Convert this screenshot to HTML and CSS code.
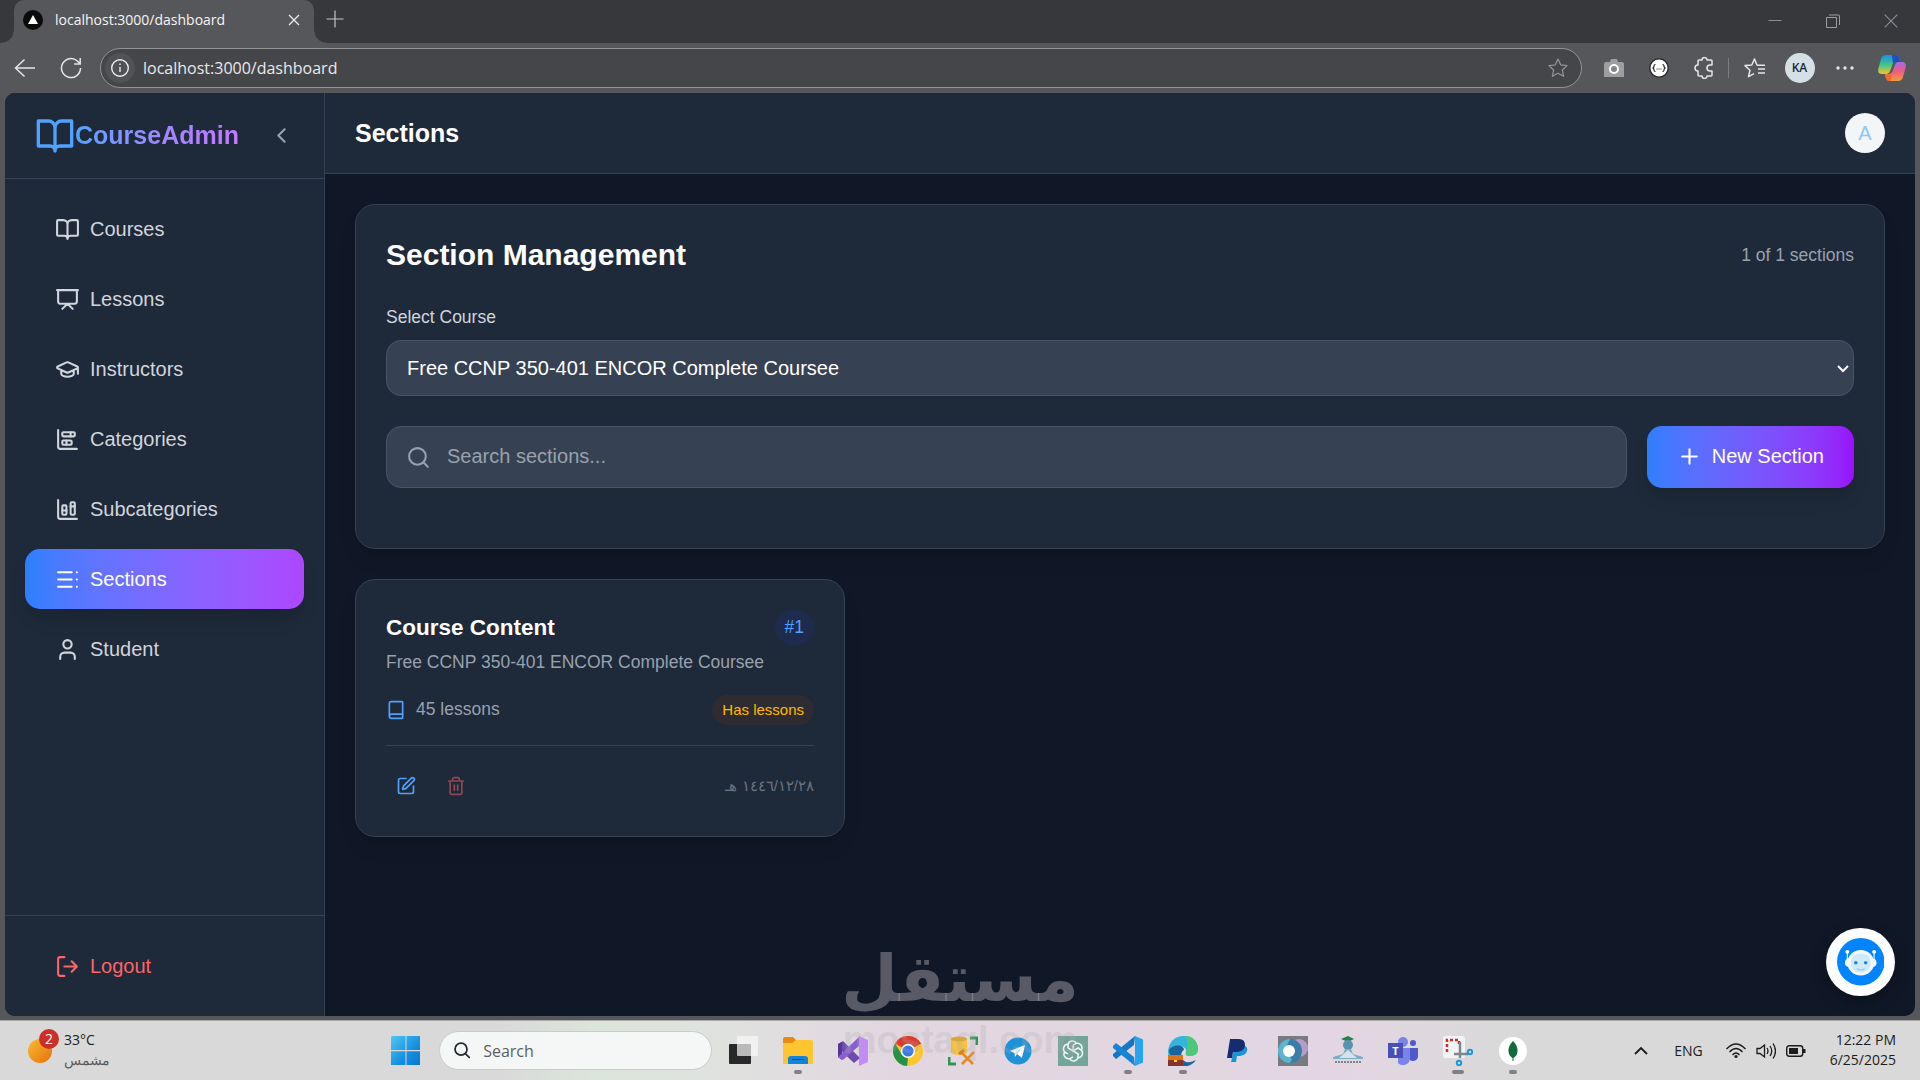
FILE: index.html
```html
<!DOCTYPE html>
<html lang="en">
<head>
  <meta charset="UTF-8">
  <title>localhost:3000/dashboard</title>
  <link rel="stylesheet" href="styles.css">
</head>
<body>

  <!-- tab strip -->
  <div class="tabstrip">
    <div class="tab">
      <svg class="favicon" viewBox="0 0 20 20"><circle cx="10" cy="10" r="10" fill="#0b0b0b"/><path d="M10 5l5 9H5z" fill="#fff"/></svg>
      <span class="tab-title">localhost:3000/dashboard</span>
      <button class="icon-btn" aria-label="Close tab"><svg width="12" height="12" viewBox="0 0 12 12" stroke="#e8e8e8" stroke-width="1.4"><path d="M1 1l10 10M11 1L1 11"/></svg></button>
    </div>
    <button class="icon-btn new-tab" aria-label="New tab"><svg width="18" height="18" viewBox="0 0 18 18" stroke="#c4c4c4" stroke-width="1.2"><path d="M9 0.5v17M0.5 9h17"/></svg></button>
    <div class="window-buttons">
      <button class="icon-btn" aria-label="Minimize"><svg width="14" height="14" viewBox="0 0 14 14" stroke="#8f9092"><path d="M0.5 6.5h13"/></svg></button>
      <button class="icon-btn" aria-label="Restore"><svg width="14" height="14" viewBox="0 0 14 14" fill="none" stroke="#9c9da0"><path d="M.5 3.5h10v10H.5zM3 1h9.5a1 1 0 0 1 1 1v9"/></svg></button>
      <button class="icon-btn" aria-label="Close"><svg width="14" height="14" viewBox="0 0 14 14" stroke="#8a9096" stroke-width="1.1"><path d="M.7.7l12.6 12.6M13.3.7L.7 13.3"/></svg></button>
    </div>
  </div>

  <!-- address bar -->
  <div class="toolbar">
    <button class="icon-btn tool" aria-label="Back"><svg width="22" height="20" viewBox="0 0 22 20" fill="none" stroke="#e6e6e6" stroke-width="1.5"><path d="M21 10H2M10.500 1.500L1.500 10l9 8.500"/></svg></button>
    <button class="icon-btn tool" aria-label="Refresh"><svg width="22" height="22" viewBox="0 0 22 22" fill="none" stroke="#e6e6e6" stroke-width="1.5"><path d="M20.500 11a9.500 9.500 0 1 1-2.900-6.800L20 6.500M20.200 1v6h-6"/></svg></button>
    <div class="address">
      <svg class="site-info" width="30" height="30" viewBox="0 0 30 30" fill="none" stroke="#ededed" stroke-width="1.4"><circle cx="15" cy="15" r="15" fill="#515256" stroke="none"/><circle cx="15" cy="15" r="8.300"/><path d="M15 14v5M15 10.500v1.500"/></svg>
      <input class="url" type="text" aria-label="Address" value="localhost:3000/dashboard">
      <svg width="20" height="20" viewBox="0 0 20 20" fill="none" stroke="#919296" stroke-width="1.3" stroke-linejoin="round"><path d="M10 1l2.700 5.800 6.300.8-4.600 4.400 1.200 6.300L10 15.200l-5.600 3.100L5.600 12 1 7.600l6.300-.8z"/></svg>
    </div>
    <div class="extensions">
      <button class="icon-btn ext" aria-label="Screenshot"><svg width="20" height="18" viewBox="0 0 20 18"><path d="M2 3h4l1-3h6l1 3h4a2 2 0 0 1 2 2v13H0V5a2 2 0 0 1 2-2z" fill="#9d9ea0"/><circle cx="10" cy="10" r="4" fill="#85868a" stroke="#fff" stroke-width="2"/></svg></button>
      <button class="icon-btn ext" aria-label="JSON viewer"><svg width="20" height="20" viewBox="0 0 20 20"><circle cx="10" cy="10" r="9.200" fill="#fff" stroke="#2b2c2f" stroke-width="1.400"/><path d="M6.500 6.500q-1.500 0-1.500 1.500t-1 2q1 .5 1 2t1.500 1.500M13.500 6.500q1.500 0 1.500 1.500t1 2q-1 .5-1 2t-1.500 1.500M7.500 11h1M9.500 11h1M11.500 11h1" fill="none" stroke="#222" stroke-width="1.200"/></svg></button>
      <button class="icon-btn ext" aria-label="Extensions"><svg width="20" height="22" viewBox="0 0 20 22" fill="none" stroke="#e6e6e6" stroke-width="1.500" stroke-linejoin="round"><path d="M5 3h3a2.500 2.500 0 0 1 5 0h4a1 1 0 0 1 1 1v4h-2a3 3 0 0 0 0 6h2v4a1 1 0 0 1-1 1h-4a2.500 2.500 0 0 1-5 0H5a1 1 0 0 1-1-1v-4a3 3 0 0 1 0-6V4a1 1 0 0 1 1-1z"/></svg></button>
      <span class="ext-divider"></span>
      <button class="icon-btn ext" aria-label="Favorites"><svg width="22" height="20" viewBox="0 0 22 20" fill="none" stroke="#e6e6e6" stroke-width="1.500" stroke-linejoin="round"><path d="M13 7.200L10.500 1 7.800 7 1 7.600l5 4.600-1.500 6.500 5.500-3M13 7.200h8M14 11h7M14 15h7"/></svg></button>
      <button class="icon-btn ext" aria-label="Profile"><span class="profile">KA</span></button>
      <button class="icon-btn ext" aria-label="Settings"><svg width="18" height="4" viewBox="0 0 18 4" fill="#e6e6e6"><circle cx="2" cy="2" r="1.700"/><circle cx="9" cy="2" r="1.700"/><circle cx="16" cy="2" r="1.700"/></svg></button>
      <button class="icon-btn ext" aria-label="Copilot">
        <svg width="28" height="26" viewBox="0 0 28 26">
          <defs>
            <linearGradient id="copA" x1="0" y1="0" x2="0" y2="1"><stop offset="0" stop-color="#1a8fe8"/><stop offset=".5" stop-color="#3fc48a"/><stop offset="1" stop-color="#f2c52e"/></linearGradient>
            <linearGradient id="copB" x1="0" y1="0" x2="0" y2="1"><stop offset="0" stop-color="#a46af0"/><stop offset=".5" stop-color="#ee5d7c"/><stop offset="1" stop-color="#f39a3f"/></linearGradient>
          </defs>
          <path d="M8 0h10q3 0 4 7h-4q-3 0-4 4l-2 5q-1 3-4 3H4q-5 0-3.500-6L3 4q1-4 5-4z" fill="url(#copA)"/>
          <path d="M14 0h4q3 0 4 7h-4q-2 0-3 2z" fill="#1b4fc4"/>
          <path d="M20 7h4q5 0 3.500 6L25 22q-1 4-5 4H11q-3 0-4-7h4q3 0 4-4l2-5q1-3 3-3z" fill="url(#copB)"/>
          <path d="M7 19h4q2 0 3-2l-1 9h-2q-3 0-4-7z" fill="#f06a35"/>
        </svg>
      </button>
    </div>
  </div>

  <!-- dashboard -->
  <div class="app">
    <aside class="sidebar">
      <div class="sidebar-header">
        <div class="brand">
          <svg class="icon brand-icon" viewBox="0 0 24 24"><path d="M2 3h6a4 4 0 0 1 4 4v14a3 3 0 0 0-3-3H2zM22 3h-6a4 4 0 0 0-4 4v14a3 3 0 0 1 3-3h7z"/></svg>
          <span class="brand-name">CourseAdmin</span>
        </div>
        <button class="collapse" aria-label="Collapse sidebar"><svg class="icon" viewBox="0 0 24 24"><path d="M15 18l-6-6 6-6"/></svg></button>
      </div>

      <nav class="nav">
        <a class="nav-item" href="#"><svg class="icon" viewBox="0 0 24 24"><path d="M12 7v14M3 18a1 1 0 0 1-1-1V4a1 1 0 0 1 1-1h5a4 4 0 0 1 4 4 4 4 0 0 1 4-4h5a1 1 0 0 1 1 1v13a1 1 0 0 1-1 1h-6a3 3 0 0 0-3 3 3 3 0 0 0-3-3z"/></svg>Courses</a>
        <a class="nav-item" href="#"><svg class="icon" viewBox="0 0 24 24"><path d="M2 3h20M21 3v11a2 2 0 0 1-2 2H5a2 2 0 0 1-2-2V3M7 21l5-5 5 5"/></svg>Lessons</a>
        <a class="nav-item" href="#"><svg class="icon" viewBox="0 0 24 24"><path d="M21.420 10.922a1 1 0 0 0-.019-1.838L12.830 5.180a2 2 0 0 0-1.660 0L2.600 9.080a1 1 0 0 0 0 1.832l8.570 3.908a2 2 0 0 0 1.660 0zM22 10v6M6 12.500V16a6 3 0 0 0 12 0v-3.500"/></svg>Instructors</a>
        <a class="nav-item" href="#"><svg class="icon" viewBox="0 0 24 24"><path d="M11 13v4M15 5v4M3 3v16a2 2 0 0 0 2 2h16"/><rect x="7" y="13" width="9" height="4" rx="1"/><rect x="7" y="5" width="12" height="4" rx="1"/></svg>Categories</a>
        <a class="nav-item" href="#"><svg class="icon" viewBox="0 0 24 24"><path d="M11 13H7M19 9h-4M3 3v16a2 2 0 0 0 2 2h16"/><rect x="15" y="5" width="4" height="12" rx="1"/><rect x="7" y="8" width="4" height="9" rx="1"/></svg>Subcategories</a>
        <a class="nav-item active" href="#"><svg class="icon" viewBox="0 0 24 24"><path d="M16 5H3M16 12H3M16 19H3M21 5h.01M21 12h.01M21 19h.01"/></svg>Sections</a>
        <a class="nav-item" href="#"><svg class="icon" viewBox="0 0 24 24"><path d="M19 21v-2a4 4 0 0 0-4-4H9a4 4 0 0 0-4 4v2"/><circle cx="12" cy="7" r="4"/></svg>Student</a>
      </nav>

      <div class="sidebar-footer">
        <button class="nav-item logout"><svg class="icon" viewBox="0 0 24 24"><path d="M9 21H5a2 2 0 0 1-2-2V5a2 2 0 0 1 2-2h4M16 17l5-5-5-5M21 12H9"/></svg>Logout</button>
      </div>
    </aside>

    <div class="main">
      <header class="header">
        <h1>Sections</h1>
        <button class="avatar">A</button>
      </header>

      <main class="content">
        <section class="panel">
          <div class="panel-head">
            <h2>Section Management</h2>
            <span class="muted">1 of 1 sections</span>
          </div>
          <label class="field-label" for="course">Select Course</label>
          <select class="field course-select" id="course">
            <option>Free CCNP 350-401 ENCOR Complete Coursee</option>
          </select>
          <div class="search-row">
            <div class="search-box">
              <svg class="icon" viewBox="0 0 24 24"><circle cx="11" cy="11" r="8"/><path d="M21 21l-4.350-4.350"/></svg>
              <input class="field" type="text" aria-label="Search sections" placeholder="Search sections...">
            </div>
            <button class="new-section"><svg class="icon" viewBox="0 0 24 24"><path d="M12 5v14M5 12h14"/></svg>New Section</button>
          </div>
        </section>

        <div class="cards">
          <article class="card">
            <div class="row">
              <h3>Course Content</h3>
              <span class="badge badge-number">#1</span>
            </div>
            <p class="muted course-name">Free CCNP 350-401 ENCOR Complete Coursee</p>
            <div class="row lessons-row">
              <span class="lessons muted"><svg class="icon icon-sm" viewBox="0 0 24 24"><path d="M4 19.500v-15A2.500 2.500 0 0 1 6.500 2H19a1 1 0 0 1 1 1v18a1 1 0 0 1-1 1H6.500a1 1 0 0 1 0-5H20"/></svg>45 lessons</span>
              <span class="badge badge-warning">Has lessons</span>
            </div>
            <div class="row card-footer">
              <div class="actions">
                <button class="action edit" aria-label="Edit section"><svg class="icon icon-sm" viewBox="0 0 24 24"><path d="M12 3H5a2 2 0 0 0-2 2v14a2 2 0 0 0 2 2h14a2 2 0 0 0 2-2v-7"/><path d="M18.375 2.625a1 1 0 0 1 3 3l-9.013 9.014a2 2 0 0 1-.853.505l-2.873.84a.5.5 0 0 1-.62-.62l.84-2.873a2 2 0 0 1 .506-.852z"/></svg></button>
                <button class="action delete" aria-label="Delete section" disabled><svg class="icon icon-sm" viewBox="0 0 24 24"><path d="M3 6h18M19 6v14a2 2 0 0 1-2 2H7a2 2 0 0 1-2-2V6M8 6V4a2 2 0 0 1 2-2h4a2 2 0 0 1 2 2v2M10 11v6M14 11v6"/></svg></button>
              </div>
              <span class="date">١٤٤٦/١٢/٢٨ هـ</span>
            </div>
          </article>
        </div>
      </main>
    </div>

    <button class="chat" aria-label="Open chat">
      <svg viewBox="0 0 48 48">
        <circle cx="24" cy="24" r="24" fill="#0084ff"/>
        <path d="M10.500 15v10M37.500 15v10" stroke="#d6ecff" stroke-width="1.300"/>
        <circle cx="10.500" cy="14" r="2" fill="#fff"/><circle cx="37.500" cy="14" r="2" fill="#fff"/>
        <rect x="8" y="21" width="32" height="8" rx="4" fill="#fff"/>
        <ellipse cx="24" cy="25" rx="13.500" ry="13" fill="#f4f8fc"/>
        <path d="M14 25c0-7 4-9 10-9s10 2 10 9-4 10-10 10-10-3-10-10z" fill="#cfeafc"/>
        <circle cx="19" cy="25" r="1.800" fill="#1a86e8"/><circle cx="29" cy="25" r="1.800" fill="#1a86e8"/>
        <path d="M20 31q4 2.500 8 0" fill="none" stroke="#8ccbf5" stroke-width="1.200"/>
      </svg>
    </button>
  </div>

  <!-- taskbar -->
  <div class="taskbar">
    <div class="weather">
      <div class="weather-icon">
        <svg width="24" height="24" viewBox="0 0 24 24"><defs><linearGradient id="sun" x1="0" y1="0" x2="1" y2="1"><stop offset="0" stop-color="#f9bd2f"/><stop offset="1" stop-color="#e6700d"/></linearGradient></defs><circle cx="12" cy="12" r="12" fill="url(#sun)"/></svg>
        <span class="weather-badge">2</span>
      </div>
      <div class="weather-text"><span>33°C</span><span class="weather-desc">مشمس</span></div>
    </div>

    <div class="dock">
      <button class="dock-item start" aria-label="Start"><svg width="30" height="30" viewBox="0 0 30 30"><defs><linearGradient id="win" x1="0" y1="0" x2="1" y2="1"><stop offset="0" stop-color="#4fc8f2"/><stop offset=".6" stop-color="#168fe0"/><stop offset="1" stop-color="#0a78cf"/></linearGradient></defs><path d="M1 0h13.500v14H0V1zM15.500 0H29v14H15.500zM0 15.200h14.500V29H0zM15.500 15.200H29V29H15.500z" fill="url(#win)"/></svg></button>
      <label class="os-search">
        <svg width="19" height="19" viewBox="0 0 19 19" fill="none" stroke="#22272e" stroke-width="2"><circle cx="8" cy="8" r="6.800"/><path d="M13 13l5 5"/></svg>
        <input type="text" placeholder="Search" aria-label="Search">
      </label>
      <button class="dock-item" aria-label="Task view"><svg width="30" height="30" viewBox="0 0 30 30"><rect x="1" y="8" width="22" height="20" rx="1" fill="#29292c"/><rect x="9" y="0" width="21" height="20" rx="1" fill="#f8f8f8" opacity=".7"/></svg></button>
      <button class="dock-item open" aria-label="File Explorer"><svg width="30" height="28" viewBox="0 0 30 28"><path d="M0 2a2 2 0 0 1 2-2h8l3 3v5H0z" fill="#e88a12"/><path d="M0 6h9l4-3h15a2 2 0 0 1 2 2v22H0z" fill="#ffc52f"/><path d="M5 27v-5a3 3 0 0 1 3-3h14a3 3 0 0 1 3 3v5z" fill="#1384d8"/><path d="M9 22.500h12" stroke="#0b4f96"/></svg></button>
      <button class="dock-item" aria-label="Visual Studio"><svg width="30" height="30" viewBox="0 0 30 30"><path d="M0 8l5-3 17 17-6 5L0 12z" fill="#6f4bb0"/><path d="M0 8l4-2v18l-4-3z" fill="#573693"/><path d="M0 21l22-21v9L5 24z" fill="#8a5fd0"/><path d="M21 0l9 4v22l-9 4z" fill="#c48bf7"/></svg></button>
      <button class="dock-item" aria-label="Chrome"><svg width="30" height="30" viewBox="0 0 30 30"><circle cx="15" cy="15" r="15" fill="#fcc62e"/><path d="M15 15L2 7.500A15 15 0 0 1 28 7.500z" fill="#dc3a2f"/><path d="M2 7.500L8.900 18.500 15 22l-1 8A15 15 0 0 1 2 7.500z" fill="#249149"/><path d="M15 8h13.300L27 6.500H12z" fill="#dc3a2f"/><circle cx="15" cy="15" r="7.200" fill="#fff"/><circle cx="15" cy="15" r="5.600" fill="#3578ea"/></svg></button>
      <button class="dock-item" aria-label="SQL tools"><svg width="30" height="30" viewBox="0 0 30 30" fill="none"><path d="M3 3v14q8 4 16 0V3z" fill="#f5c242"/><ellipse cx="11" cy="3" rx="8" ry="2.500" fill="#e0a52e"/><path d="M22 2h7v7M1 21v7h7" stroke="#2e9651" stroke-width="3"/><path d="M14 17l11 11M26 16L14 28" stroke="#e38a22" stroke-width="2.500"/><path d="M11 18l5-4" stroke="#d57c18" stroke-width="3"/></svg></button>
      <button class="dock-item" aria-label="Telegram"><svg width="28" height="28" viewBox="0 0 28 28"><circle cx="14" cy="14" r="13.500" fill="#1d92d8"/><path d="M6 14L21 8l-3 13-5-4-2 3-.500-4z" fill="#fff"/><path d="M10.500 16l8-6-5.500 7z" fill="#bcd9ec"/></svg></button>
      <button class="dock-item" aria-label="ChatGPT"><svg width="30" height="30" viewBox="0 0 30 30" fill="none" stroke="#f0f5f3" stroke-width="1.500"><path d="M0 0h30v30H0z" fill="#74a59a" stroke="none"/><g><path d="M10 12V9a4.500 4.500 0 0 1 8.500-1.500M10 12l5 3 6-3.500"/><path d="M10 12V9a4.500 4.500 0 0 1 8.500-1.500M10 12l5 3 6-3.500" transform="rotate(60 15 15)"/><path d="M10 12V9a4.500 4.500 0 0 1 8.500-1.500" transform="rotate(120 15 15)"/><path d="M10 12V9a4.500 4.500 0 0 1 8.500-1.500" transform="rotate(180 15 15)"/><path d="M10 12V9a4.500 4.500 0 0 1 8.500-1.500" transform="rotate(240 15 15)"/><path d="M10 12V9a4.500 4.500 0 0 1 8.500-1.500" transform="rotate(300 15 15)"/></g></svg></button>
      <button class="dock-item open" aria-label="VS Code"><svg width="30" height="30" viewBox="0 0 30 30"><path d="M22 0l-1 9L3 23l-3-3v-2z" fill="#1476c4"/><path d="M22 30l-1-9L3 7 0 10v2z" fill="#1584d2"/><path d="M22 0l8 3.500v23L22 30z" fill="#27a4f0"/></svg></button>
      <button class="dock-item open" aria-label="Edge"><svg width="30" height="30" viewBox="0 0 30 30"><path d="M0 15C1 5 8 0 15 0c9 0 15 6 15 13 0 5-4 7-8 7-3 0-5-1-4-4 1-4-3-6-7-5C6 11 2 14 0 20z" fill="#35b5dc"/><path d="M18 0c7 0 12 6 12 13 0 5-4 7-8 7-3 0-5-1-4-4 2-5 2-9 0-16z" fill="#4cc878"/><path d="M1 14c3-6 15-6 15 0-4 2-4 9 2 12 4 1 7-1 10-2-4 6-10 7-15 6C4 28 1 21 1 14z" fill="#1a659e"/><path d="M0 19h15v11H0z" fill="#db7415"/><path d="M0 24h15v6H0z" fill="#87312b"/><path d="M6 24h3v2H6z" fill="#ffcf39"/></svg></button>
      <button class="dock-item" aria-label="PayPal"><svg width="22" height="24" viewBox="0 0 22 24"><path d="M8 6h9q4 2 3 6t-7 5h-3l-1 6H4z" fill="#1794dc"/><path d="M3 0h9q6 0 6 6t-8 7H6l-1 6H0z" fill="#172c70"/></svg></button>
      <button class="dock-item" aria-label="Screen recorder"><svg width="30" height="30" viewBox="0 0 30 30"><path d="M0 0h30v30H0z" fill="#777a7e"/><circle cx="21" cy="12" r="9" fill="#b79cc8"/><circle cx="12" cy="15" r="12" fill="#397ea9"/><path d="M12 3a12 12 0 0 0 0 24l2-4-8-8z" fill="#5cb5d0"/><circle cx="11" cy="15" r="6" fill="#fff"/></svg></button>
      <button class="dock-item" aria-label="Student portal"><svg width="30" height="30" viewBox="0 0 30 30"><path d="M8 3l7-3 6 3-6 3z" fill="#238247"/><circle cx="15" cy="9" r="5" fill="#5793b0"/><path d="M12 13h6l2 5 10 3v2H0v-2l10-3z" fill="#7baec6"/><path d="M15 14l9 8H6z" fill="#d4e3e9"/><path d="M2 26h26" stroke="#7d8588" stroke-width="2" stroke-dasharray="2 1"/></svg></button>
      <button class="dock-item" aria-label="Teams"><span class="teams"><svg width="30" height="28" viewBox="0 0 30 28"><circle cx="15" cy="5" r="5" fill="#7b83eb"/><circle cx="25" cy="6" r="3" fill="#5059c9"/><path d="M21 11h9v8a5 5 0 0 1-9 3z" fill="#5059c9"/><path d="M10 11h12v10a7 7 0 0 1-12 5z" fill="#7b83eb"/></svg><span class="teams-badge">T</span></span></button>
      <button class="dock-item open wide" aria-label="Snipping Tool"><svg width="30" height="30" viewBox="0 0 30 30" fill="none"><rect x="0" y="0" width="22" height="22" rx="2" fill="#f1f4f6"/><path d="M4 16V4h12v6" stroke="#d32c20" stroke-width="2.500" stroke-dasharray="3 2"/><path d="M17 6v16M11 18h14" stroke="#80868c" stroke-width="2.500"/><circle cx="16" cy="27" r="2.200" stroke="#1c96dc" stroke-width="2"/><circle cx="27" cy="16" r="2.200" stroke="#1c96dc" stroke-width="2"/></svg></button>
      <button class="dock-item open" aria-label="MongoDB Compass"><svg width="28" height="28" viewBox="0 0 28 28"><circle cx="14" cy="14" r="14" fill="#fff"/><path d="M14 4q-5 5-4.500 10.500Q10 19 13.500 21v3h1v-3q3.500-2 4-6.500Q19 9 14 4z" fill="#116b3c"/></svg></button>
    </div>

    <div class="tray">
      <button class="icon-btn" aria-label="Hidden icons"><svg width="14" height="10" viewBox="0 0 14 10" fill="none" stroke="#1c1c1c" stroke-width="1.800"><path d="M1 8l6-6 6 6"/></svg></button>
      <span class="lang">ENG</span>
      <div class="status">
        <svg width="20" height="16" viewBox="0 0 20 16" fill="none" stroke="#1c1c1c" stroke-width="1.300"><path d="M.5 6q9.500-10 19 0M3.500 9q6.500-7 13 0M6.500 12q3.500-4 7 0"/><circle cx="10" cy="13.500" r="1.600" fill="#1c1c1c" stroke="none"/></svg>
        <svg width="20" height="16" viewBox="0 0 20 16" fill="none" stroke="#1c1c1c" stroke-width="1.300"><path d="M1 5.500h3L8.500 2v12L4 10.500H1zM11 5q2 3 0 6M14 3q3.500 5 0 10M17 .5q5 7.500 0 15"/></svg>
        <svg width="20" height="14" viewBox="0 0 20 14"><rect x=".7" y="1.700" width="16" height="10.600" rx="2.500" fill="none" stroke="#1c1c1c" stroke-width="1.400"/><path d="M3 4h9v6H3zM17 5h2.500v4H17z" fill="#1c1c1c"/></svg>
      </div>
      <div class="clock"><span>12:22 PM</span><span>6/25/2025</span></div>
    </div>
  </div>

  <div class="watermark">
    <span class="watermark-logo" lang="ar">مستقل</span>
    <span class="watermark-url">mostaql.com</span>
  </div>

</body>
</html>
```
FILE: styles.css
```css
* {
  box-sizing: border-box;
}

body {
  margin: 0;
  height: 100vh;
  display: flex;
  flex-direction: column;
  overflow: hidden;
  position: relative;
  background: #56575b;
  font-family: "Open Sans", "Noto Sans", sans-serif;
}

button,
input,
select {
  font-family: inherit;
  font-size: inherit;
  color: inherit;
}

button {
  padding: 0;
  border: none;
  background: none;
  cursor: pointer;
}

h1, h2, h3, p {
  margin: 0;
}

.icon-btn {
  display: flex;
  align-items: center;
  justify-content: center;
}

/* browser */

.tabstrip {
  height: 43px;
  flex: none;
  display: flex;
  align-items: flex-start;
  padding-left: 14px;
  background: #37383b;
}

.tab {
  position: relative;
  width: 300px;
  height: 43px;
  padding: 0 14px 4px 9px;
  display: flex;
  align-items: center;
  background: #56575b;
  border-radius: 10px 10px 0 0;
  color: #f5f5f5;
}

.tab::before,
.tab::after {
  content: "";
  position: absolute;
  bottom: 0;
  width: 12px;
  height: 12px;
}

.tab::before {
  right: 100%;
  background: radial-gradient(circle at 0 0, #37383b 11px, #56575b 12px);
}

.tab::after {
  left: 100%;
  background: radial-gradient(circle at 100% 0, #37383b 11px, #56575b 12px);
}

.favicon {
  width: 20px;
  height: 20px;
}

.tab-title {
  flex: 1;
  margin-left: 12px;
  font-size: 14px;
}

.new-tab {
  margin: 10px 0 0 12px;
}

.window-buttons {
  margin-left: auto;
  display: flex;
}

.window-buttons .icon-btn {
  width: 58px;
  height: 42px;
}

.toolbar {
  height: 50px;
  flex: none;
  display: flex;
  align-items: center;
  padding: 0 4px 0 2px;
}

.tool {
  width: 46px;
}

.address {
  flex: 1;
  height: 40px;
  margin: 0 9px 0 6px;
  padding: 0 13px 0 4px;
  display: flex;
  align-items: center;
  background: #454649;
  border: 1px solid #929397;
  border-radius: 20px;
}

.url {
  flex: 1;
  margin-left: 8px;
  padding: 0;
  border: none;
  outline: none;
  background: none;
  color: #e9e9e9;
  font-size: 16px;
}

.extensions {
  display: flex;
  align-items: center;
}

.ext {
  width: 45px;
  height: 40px;
}

.ext:last-child {
  width: 49px;
}

.ext-divider {
  width: 1px;
  height: 20px;
  margin: 0 3px 0 2px;
  background: #7c7d81;
}

.profile {
  width: 30px;
  height: 30px;
  border-radius: 50%;
  background: #d5e0e6;
  color: #23282d;
  font-size: 12px;
  font-weight: 600;
  line-height: 30px;
}

/* dashboard, shown at 125% browser zoom */

.app {
  zoom: 1.25;
  flex: 1;
  min-height: 0;
  margin: 0 4px 3px;
  display: flex;
  position: relative;
  overflow: hidden;
  border-radius: 8px;
  background: #101726;
  color: #fff;
  font-family: "Liberation Sans", Arial, sans-serif;
  font-size: 16px;
  line-height: 24px;
}

.icon {
  width: 20px;
  height: 20px;
  flex: none;
  fill: none;
  stroke: currentColor;
  stroke-width: 2;
  stroke-linecap: round;
  stroke-linejoin: round;
}

.icon-sm {
  width: 16px;
  height: 16px;
}

.sidebar {
  width: 256px;
  flex: none;
  display: flex;
  flex-direction: column;
  background: #1e2939;
  border-right: 1px solid #364153;
}

.sidebar-header {
  height: 69px;
  padding: 0 24px;
  display: flex;
  align-items: center;
  justify-content: space-between;
  border-bottom: 1px solid #364153;
}

.brand {
  display: flex;
  align-items: center;
}

.brand-icon {
  width: 32px;
  height: 32px;
  color: #51a2ff;
}

.brand-name {
  font-size: 20px;
  font-weight: bold;
  line-height: 28px;
  background: linear-gradient(to right in oklab, #51a2ff, #a684ff 60%, #c27aff);
  -webkit-background-clip: text;
  background-clip: text;
  color: transparent;
}

.collapse {
  display: flex;
  color: #99a1af;
}

.nav {
  flex: 1;
  padding: 16px;
  display: flex;
  flex-direction: column;
  gap: 8px;
}

.nav-item {
  width: 100%;
  height: 48px;
  padding: 0 24px;
  display: flex;
  align-items: center;
  gap: 8px;
  border-radius: 12px;
  color: #d1d5dc;
  text-decoration: none;
}

.nav-item.active {
  background: linear-gradient(to right in oklab, #2b7fff, #ad46ff);
  color: #fff;
  box-shadow: 0 10px 15px -3px rgba(0, 0, 0, 0.1), 0 4px 6px -4px rgba(0, 0, 0, 0.1);
}

.sidebar-footer {
  padding: 16px;
  border-top: 1px solid #364153;
}

.nav-item.logout {
  color: #ff6467;
}

.main {
  flex: 1;
  min-width: 0;
}

.header {
  padding: 16px 24px;
  display: flex;
  align-items: center;
  justify-content: space-between;
  background: #1e2939;
  border-bottom: 1px solid #364153;
}

.header h1 {
  font-size: 20px;
  line-height: 28px;
}

.avatar {
  width: 32px;
  height: 32px;
  border-radius: 50%;
  background: #f3f6f7;
  color: #8ec5ff;
}

.content {
  padding: 24px;
  display: flex;
  flex-direction: column;
  gap: 24px;
}

.panel,
.card {
  padding: 24px;
  background: #1e2939;
  border: 1px solid #364153;
  border-radius: 16px;
  box-shadow: 0 10px 15px -3px rgba(0, 0, 0, 0.1), 0 4px 6px -4px rgba(0, 0, 0, 0.1);
}

.panel-head,
.row {
  display: flex;
  align-items: center;
  justify-content: space-between;
}

.panel-head {
  margin-bottom: 24px;
}

.panel h2 {
  font-size: 24px;
  line-height: 32px;
}

.muted {
  color: #99a1af;
  font-size: 14px;
  line-height: 20px;
}

.field-label {
  display: block;
  margin-bottom: 8px;
  color: #d1d5dc;
  font-size: 14px;
  line-height: 20px;
}

.field {
  width: 100%;
  background: #364153;
  border: 1px solid #4a5565;
  border-radius: 12px;
  outline: none;
}

.field::placeholder {
  color: #99a1af;
}

.course-select {
  display: block;
  height: 45px;
  padding: 0 0 0 12px;
}

.search-row {
  display: flex;
  gap: 16px;
  margin: 24px 0;
}

.search-box {
  flex: 1;
  position: relative;
  color: #99a1af;
}

.search-box .icon {
  position: absolute;
  left: 16px;
  top: 15px;
}

.search-box .field {
  display: block;
  height: 49px;
  padding: 0 16px 0 48px;
  color: #fff;
}

.new-section {
  padding: 0 24px;
  display: flex;
  align-items: center;
  gap: 8px;
  border-radius: 12px;
  background: linear-gradient(to right in oklab, #2b7fff, #9810fa);
  color: #fff;
  box-shadow: 0 10px 15px -3px rgba(0, 0, 0, 0.1), 0 4px 6px -4px rgba(0, 0, 0, 0.1);
}

.cards {
  display: grid;
  grid-template-columns: repeat(3, 1fr);
  gap: 24px;
}

.card h3 {
  font-size: 18px;
  line-height: 28px;
}

.badge {
  padding: 4px 8px;
  border-radius: 14px;
}

.badge-number {
  background: #1e2b4d;
  color: #51a2ff;
  font-size: 14px;
  line-height: 20px;
}

.badge-warning {
  background: #2f2c31;
  color: #ffb900;
  font-size: 12px;
  line-height: 16px;
}

.course-name {
  margin-top: 4px;
}

.lessons-row {
  margin: 16px 0;
}

.lessons {
  display: flex;
  align-items: center;
  gap: 8px;
}

.lessons .icon,
.edit {
  color: #51a2ff;
}

.card-footer {
  padding-top: 16px;
  border-top: 1px solid #364153;
}

.actions {
  display: flex;
  gap: 8px;
}

.action {
  padding: 8px;
  display: flex;
}

.delete {
  color: #ff6467;
  opacity: 0.5;
}

.date {
  color: #6a7282;
  font-size: 12px;
  line-height: 16px;
}

.chat {
  position: absolute;
  right: 16px;
  bottom: 16px;
  width: 55px;
  height: 55px;
  display: flex;
  align-items: center;
  justify-content: center;
  border-radius: 50%;
  background: #fff;
  box-shadow: 0 4px 12px rgba(0, 0, 0, 0.3);
}

.chat svg {
  width: 38px;
  height: 38px;
}

/* taskbar */

.taskbar {
  height: 60px;
  flex: none;
  display: grid;
  grid-template-columns: 1fr auto 1fr;
  align-items: center;
  border-top: 1px solid #a9a9ab;
  background: linear-gradient(to right, #d9d9d9 26%, #dbe5db 31%, #e0e1df 38%, #e2d6e1 47%, #e3d6e2 70%, #d9d9d9 78%);
  color: #1c1c1c;
  font-size: 14px;
  line-height: 20px;
}

.weather {
  padding-left: 28px;
  display: flex;
  align-items: center;
  gap: 12px;
}

.weather-icon {
  position: relative;
  display: flex;
}

.weather-badge {
  position: absolute;
  left: 11px;
  top: -10px;
  width: 20px;
  height: 20px;
  border-radius: 50%;
  background: #cc2f26;
  color: #fff;
  text-align: center;
}

.weather-text,
.clock {
  display: flex;
  flex-direction: column;
  padding-bottom: 2px;
}

.weather-desc {
  color: #5b5b5b;
}

.dock {
  display: flex;
  align-items: center;
  padding-left: 4px;
}

.dock-item {
  position: relative;
  width: 55px;
  height: 59px;
  display: flex;
  align-items: center;
  justify-content: center;
}

.dock-item.open::after {
  content: "";
  position: absolute;
  bottom: 6px;
  left: 50%;
  width: 8px;
  height: 4px;
  margin-left: -4px;
  border-radius: 2px;
  background: #808184;
}

.dock-item.wide::after {
  width: 12px;
  margin-left: -6px;
}

.dock-item.start {
  width: 44px;
}

.os-search {
  width: 273px;
  height: 39px;
  margin: 0 4px 0 11px;
  padding: 0 14px;
  display: flex;
  align-items: center;
  gap: 13px;
  background: #f5f7f6;
  border: 1px solid #c9cbca;
  border-radius: 20px;
}

.os-search input {
  width: 100%;
  border: none;
  outline: none;
  background: none;
  padding: 0;
  font-size: 16px;
}

.os-search input::placeholder {
  color: #5c5f62;
}

.teams {
  position: relative;
  display: flex;
}

.teams-badge {
  position: absolute;
  left: 0;
  top: 6px;
  width: 15px;
  height: 15px;
  background: #4650b8;
  color: #fff;
  font-size: 11px;
  font-weight: bold;
  line-height: 15px;
}

.tray {
  padding-right: 24px;
  display: flex;
  align-items: center;
  justify-content: flex-end;
}

.lang {
  margin: 0 23px 0 26px;
}

.status {
  display: flex;
  align-items: center;
  gap: 10px;
  margin-right: 24px;
}

.clock {
  text-align: right;
}

.watermark {
  position: absolute;
  left: 50%;
  bottom: 18px;
  transform: translateX(-50%);
  display: flex;
  flex-direction: column;
  align-items: center;
  pointer-events: none;
}

.watermark-logo {
  color: rgba(160, 160, 165, 0.5);
  font-family: "DejaVu Sans", sans-serif;
  font-size: 65px;
  font-weight: bold;
  line-height: 78px;
}

.watermark-url {
  color: rgba(170, 170, 170, 0.25);
  font-family: "Liberation Sans", Arial, sans-serif;
  font-size: 38px;
  font-weight: bold;
  line-height: 44px;
}
```
